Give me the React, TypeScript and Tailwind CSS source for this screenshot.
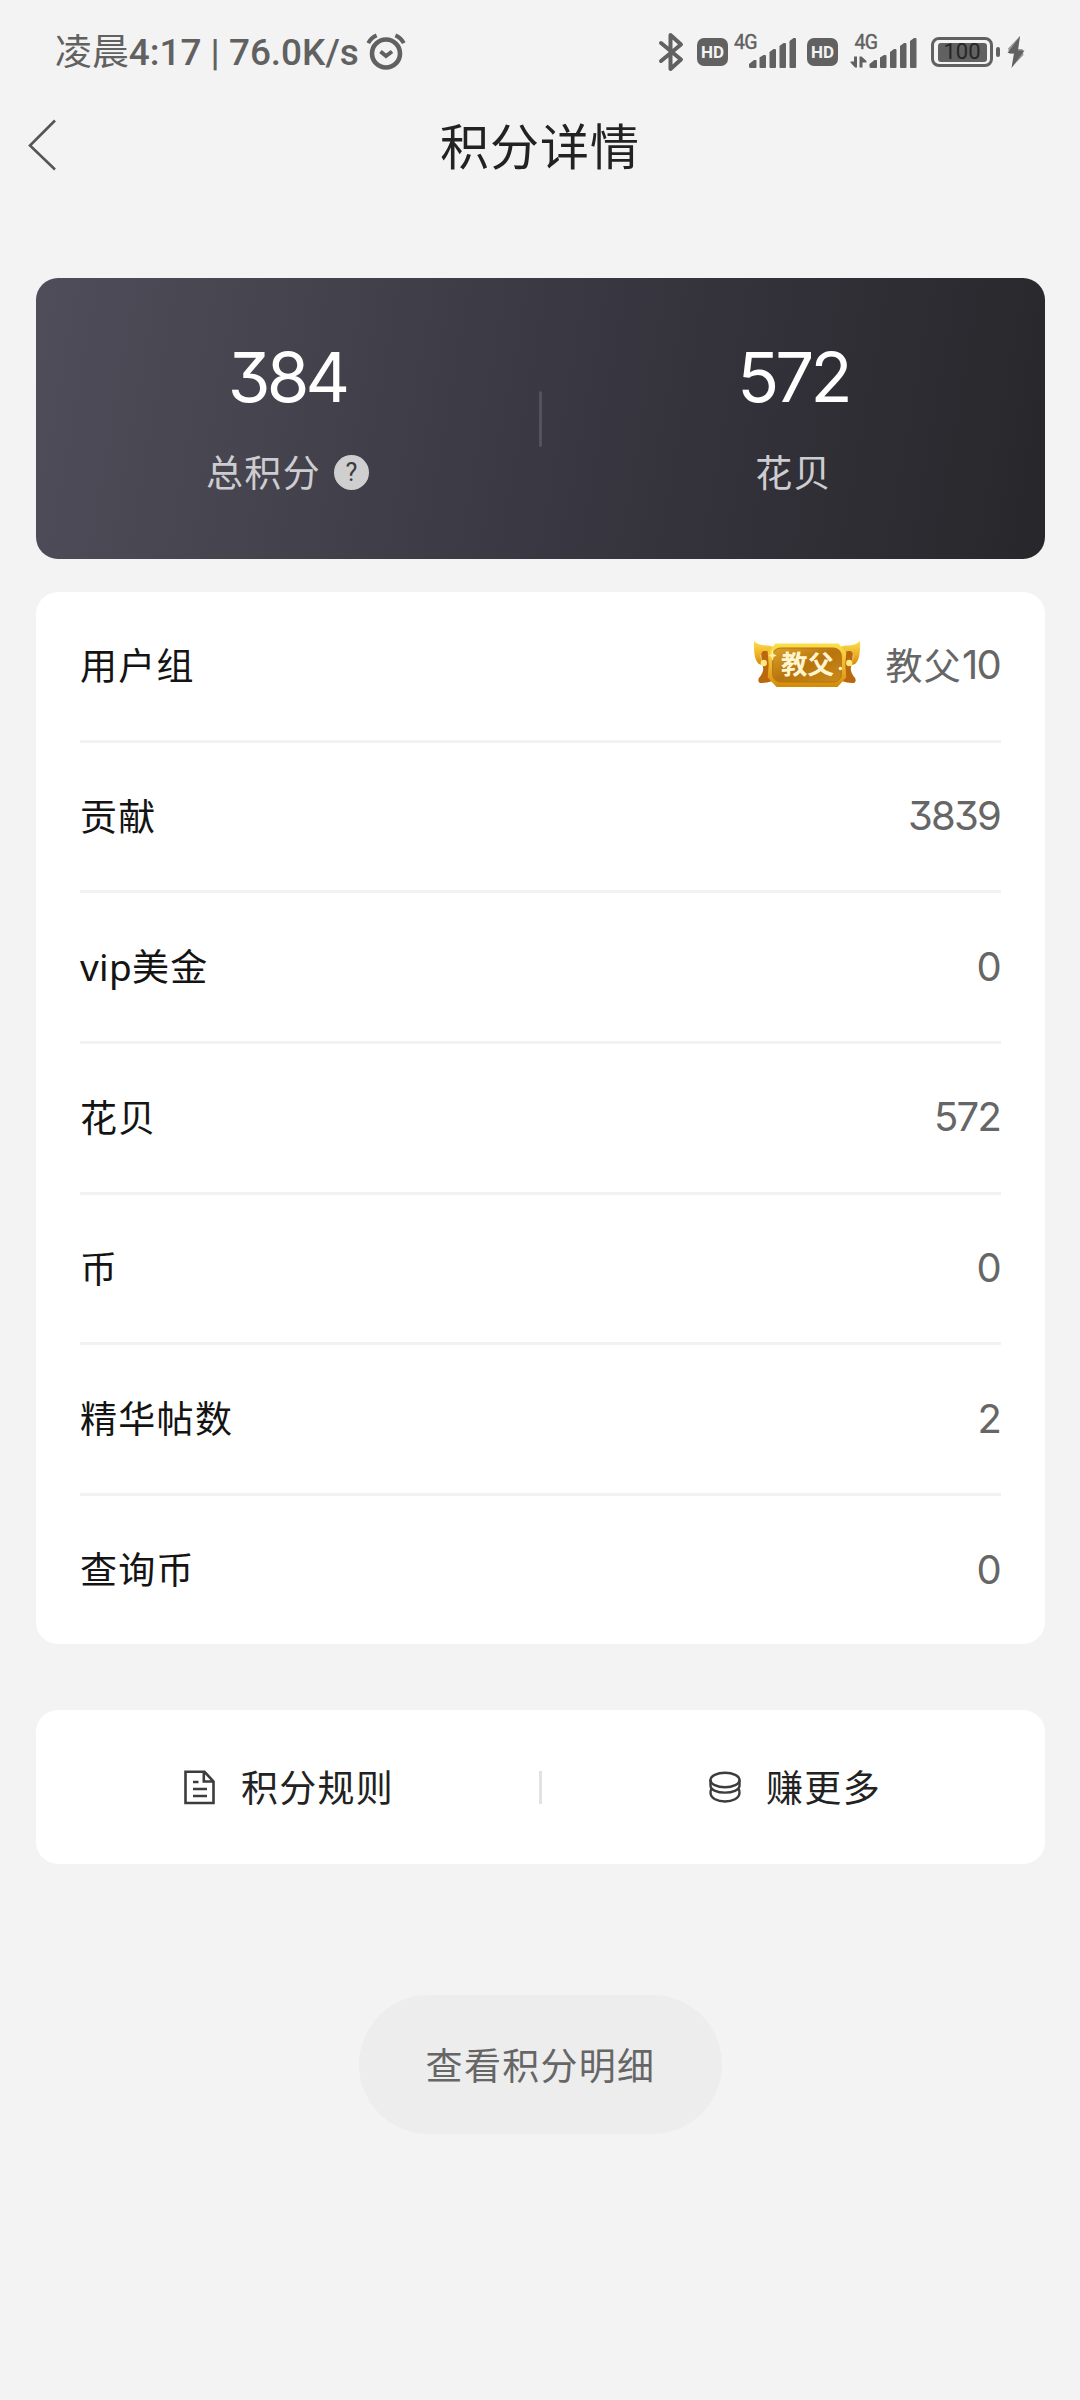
import type { ReactNode } from "react";
import clsx from "clsx";

interface CreditRow {
  label: string;
  latin?: string;    // prefijo latino antes del texto en chino
  group?: string;    // nombre del grupo, va con insignia
  value: string;
}

const ROWS: CreditRow[] = [
  { label: "用户组", group: "教父", value: "10" },
  { label: "贡献", value: "3839" },
  { label: "美金", latin: "vip", value: "0" },
  { label: "花贝", value: "572" },
  { label: "币", value: "0" },
  { label: "精华帖数", value: "2" },
  { label: "查询币", value: "0" },
];

// ─── Status bar icons ─────────────────────────────────────────────────────────
function AlarmIcon() {
  return (
    <svg width="40" height="38" viewBox="0 0 40 38" fill="none" stroke="#616161" className="ml-[7px] shrink-0">
      <circle cx="20" cy="20.5" r="14" strokeWidth="4.6" />
      <path d="M14.500 18.5l5.500 4.5 6-4.5" strokeWidth="4" />
      <path d="M2.2 10.2Q5 4.8 10.6 2.4M37.8 10.2Q35 4.8 29.4 2.4" strokeWidth="4" />
    </svg>
  );
}

function BluetoothIcon() {
  return (
    <svg width="26" height="40" viewBox="0 0 26 40" fill="none" stroke="#616161" strokeWidth="4" strokeLinejoin="round" strokeLinecap="round">
      <path d="M3 11L23 27.500 12.500 37V3L23 12.500 3 29" />
    </svg>
  );
}

function HdIcon() {
  return (
    <div className="flex h-[28px] w-[31px] items-center justify-center rounded-[7px] bg-[#616161] font-[Roboto] text-[17px] font-bold leading-none text-[#f3f3f3]">
      HD
    </div>
  );
}

function SignalIcon({ arrows = false }: { arrows?: boolean }) {
  return (
    <svg width="68" height="42" viewBox="0 0 68 42" fill="#616161">
      <text x={arrows ? 4.5 : 0} y="18" fontFamily="Roboto" fontSize="19.5" textLength="23.500" stroke="#616161" strokeWidth="0.400">
        4G
      </text>
      {arrows && <path d="M4 25.500h3V36.500H5L0.500 31.500v-1H4zM9.500 36.500V25.500h2l5 4.500v1.500h-4v5z" />}
      <g transform={arrows ? "translate(4.5 0)" : "translate(0 0)"}>
        <path d="M15 35l0-2 5-4h2q.5 0 .5 1v6q0 1-1 1H16.500q-1.500 0-1.500-1.500z" />
        <path d="M25.500 26.500l4-2.500h1.500q1 0 1 1V36q0 1-1 1h-4.500q-1 0-1-1z" />
        <path d="M35.500 21l4-3h1.500q1 0 1 1V36q0 1-1 1h-4.500q-1 0-1-1z" />
        <path d="M45.500 15l4-3h1.500q1 0 1 1V36q0 1-1 1h-4.500q-1 0-1-1z" />
        <path d="M55.500 10l4-3h1.500q1 0 1 1V36q0 1-1 1h-4.500q-1 0-1-1z" />
      </g>
    </svg>
  );
}

function BatteryIcon() {
  return (
    <div className="flex items-center">
      <div className="flex h-[30px] w-[62px] items-center justify-center rounded-[8px] border-[3px] border-[#616161]">
        <div className="flex h-[19px] w-[49px] items-center justify-center rounded-[3px] bg-[#616161] font-[Roboto] text-[22px] leading-none text-[#262626]">
          100
        </div>
      </div>
      <div className="ml-[3px] h-[10px] w-[4px] rounded-[2px] bg-[#616161]" />
    </div>
  );
}

// ─── Page icons ───────────────────────────────────────────────────────────────
function DocIcon() {
  return (
    <svg width="31" height="36" viewBox="0 0 31 36" fill="none" stroke="#3c3c3c" strokeWidth="2.6">
      <path d="M1.500 2.800H20.500L29.500 12.500V34H1.500z" />
      <path d="M19.800 3V12.500H29.500" />
      <path d="M9 13h5.500M9 20h14M9 27h14" />
    </svg>
  );
}

function CoinsIcon() {
  return (
    <svg width="32" height="34" viewBox="0 0 32 34" fill="none" stroke="#3c3c3c" strokeWidth="2.400">
      <ellipse cx="16" cy="10" rx="14.500" ry="7.300" />
      <path d="M1.500 10v5.500c0 9.500 29 9.500 29 0V10" />
      <path d="M2.700 18.500c-1.200 1.200-1.200 2-1.200 4 0 12 29 12 29 0 0-2 0-2.800-1.200-4" />
    </svg>
  );
}

function GroupBadge({ name }: { name: string }) {
  return (
    <svg width="108" height="48" viewBox="0 0 110 48" preserveAspectRatio="none" className="relative -top-[1px] mr-[24px]">
      <defs>
        <linearGradient id="frame" x1="0" y1="0" x2="0" y2="1">
          <stop offset="0" stopColor="#fbe04a" />
          <stop offset="0.550" stopColor="#efb22b" />
          <stop offset="1" stopColor="#d18a05" />
        </linearGradient>
        <linearGradient id="plate" x1="0" y1="0" x2="1" y2="1">
          <stop offset="0" stopColor="#dda42a" />
          <stop offset="0.500" stopColor="#b8740f" />
          <stop offset="1" stopColor="#c98a1c" />
        </linearGradient>
      </defs>
      <path d="M9 24q4 6-3 14-2 5 3 5t11-2V12L8 10zM101 24q-4 6 3 14 2 5-3 5t-11-2V12l12-2z" fill="#b9690b" />
      <path
        d="M1 1q5 5 15 4.500l8 2-5 6q-9-6-11 1-1 6 4 10Q0 28 1 1zM109 1q-5 5-15 4.500l-8 2 5 6q9-6 11 1 1 6-4 10Q110 28 109 1z"
        fill="url(#frame)"
      />
      <path d="M23 3.500H87l8 9-1 12 1 13-9 9.500H24l-9-9.500 1-13-1-12z" fill="url(#frame)" />
      <rect x="20" y="8" width="70" height="34" rx="8" fill="url(#plate)" stroke="#b7740a" strokeWidth="1" />
      <text x="28.500" y="34.500" fontFamily="Noto Sans CJK SC" fontSize="26" fontWeight="700" fill="#fff6cf" textLength="54" lengthAdjust="spacingAndGlyphs">
        {name}
      </text>
      <circle cx="11" cy="23" r="3.200" fill="#ffe682" />
      <circle cx="98" cy="23" r="3.200" fill="#ffe682" />
      <circle cx="89" cy="28.500" r="1.800" fill="#fff6cf" />
      <path d="M20 9l1 5 3 1.500-3 1.500-1 4-1.500-4-2.500-1.500 2.500-1.500z" fill="#fff0a0" />
    </svg>
  );
}

// ─── Sections ─────────────────────────────────────────────────────────────────
function StatusBar() {
  return (
    <div className="flex h-[104px] items-center justify-between pl-[55px] pr-[55px] text-[#616161]">
      <div className="flex items-center">
        <span className="whitespace-pre pt-[2px] font-[Roboto,'Noto_Sans_CJK_SC',sans-serif] text-[36.9px] font-medium leading-none">
          <span className="font-normal">凌晨</span>4:17 | 76.0K/s
        </span>
        <AlarmIcon />
      </div>
      <div className="flex items-center">
        <BluetoothIcon />
        <div className="ml-[13px]"><HdIcon /></div>
        <div className="ml-[6px]"><SignalIcon /></div>
        <div className="ml-[5px]"><HdIcon /></div>
        <div className="ml-[12px]"><SignalIcon arrows /></div>
        <div className="ml-[13px]"><BatteryIcon /></div>
        <svg width="18" height="32" viewBox="0 0 18 32" fill="#616161" className="ml-[7px]">
          <path d="M13 0L0.500 17H7L4.500 32 17.500 14.500H11z" />
          <path d="M13 0L1 12.500l1.500 5.500H9L5 31l11.500-12-1-6H10z" opacity="0.600" />
        </svg>
      </div>
    </div>
  );
}

function Stat({ value, children }: { value: string; children: ReactNode }) {
  return (
    <div className="flex flex-1 flex-col items-center pt-[61px]">
      <div className="mr-[1px] font-[Inter] text-[69px] leading-[76px] tracking-[-3.8px] text-white [font-feature-settings:'cv09']">
        {value}
      </div>
      <div className="mt-[29px] flex h-[56px] items-center text-[37px] tracking-[1.3px] text-[#cdcdd1]">{children}</div>
    </div>
  );
}

export default function App() {
  return (
    <div className="h-[2400px] w-[1080px] bg-[#f3f3f3] font-['Noto_Sans_CJK_SC',sans-serif]">
      <StatusBar />

      <header className="relative flex h-[84px] items-center justify-center pb-[6px]">
        <svg width="30" height="52" viewBox="0 0 30 52" fill="none" stroke="#555" strokeWidth="2.600" className="absolute left-[27px] top-[15px]">
          <path d="M28 1.500L3 26.500 28 50.500" />
        </svg>
        <h1 className="text-[49px] leading-none tracking-[1px] text-[#222]">积分详情</h1>
      </header>

      <main className="pl-[36px] pr-[35px] pt-[90px]">
        <section className="flex h-[281px] rounded-[22px] bg-[linear-gradient(100deg,#4e4d59_0%,#34333c_65%,#27272b_100%)]">
          <Stat value="384">
            总积分
            <span className="ml-[13px] flex h-[35px] w-[35px] items-center justify-center rounded-full bg-[#cfcfcf] font-[Roboto] text-[25px] leading-none tracking-normal text-[#3a3942]">
              ?
            </span>
          </Stat>
          <div className="mt-[113px] h-[56px] w-[3px] rounded-full bg-[#53535b]" />
          <Stat value="572">花贝</Stat>
        </section>

        <section className="mt-[33px] h-[1052px] rounded-[22px] bg-white px-[44px]">
          {ROWS.map((row, i) => (
            <div
              key={row.label}
              className={clsx(
                "flex items-center justify-between pb-[2px]",
                i < ROWS.length - 1 ? "h-[150.7px] border-b-[3px] border-[#f2f2f2]" : "h-[148px]",
              )}
            >
              <span className="pb-[1px] text-[37px] leading-none tracking-[1.3px] text-[#141414]">
                {row.latin && <span className="font-['Noto_Sans'] tracking-[0.3px]">{row.latin}</span>}
                {row.label}
              </span>
              <span className="flex items-center leading-none text-[#666]">
                {row.group && <GroupBadge name={row.group} />}
                {row.group && <span className="text-[37px] tracking-[1.3px]">{row.group}</span>}
                <span className="mr-[1px] pt-[1px] font-[Inter] text-[40px] tracking-[-1.8px] [font-feature-settings:'cv09']">
                  {row.value}
                </span>
              </span>
            </div>
          ))}
        </section>

        <section className="mt-[66px] flex h-[154px] items-center rounded-[22px] bg-white text-[37px] tracking-[1.3px] text-[#222]">
          <div className="flex flex-1 items-center justify-center pl-[3px]">
            <DocIcon />
            <span className="ml-[26px]">积分规则</span>
          </div>
          <div className="h-[33px] w-[3px] bg-[#e2e2e2]" />
          <div className="flex flex-1 items-center justify-center pl-[3px]">
            <CoinsIcon />
            <span className="ml-[25px]">赚更多</span>
          </div>
        </section>

        <button className="mx-auto mt-[131px] flex h-[139px] w-[363px] items-center justify-center rounded-full bg-[#ededed] text-[37px] tracking-[1.3px] text-[#666]">
          查看积分明细
        </button>
      </main>
    </div>
  );
}
